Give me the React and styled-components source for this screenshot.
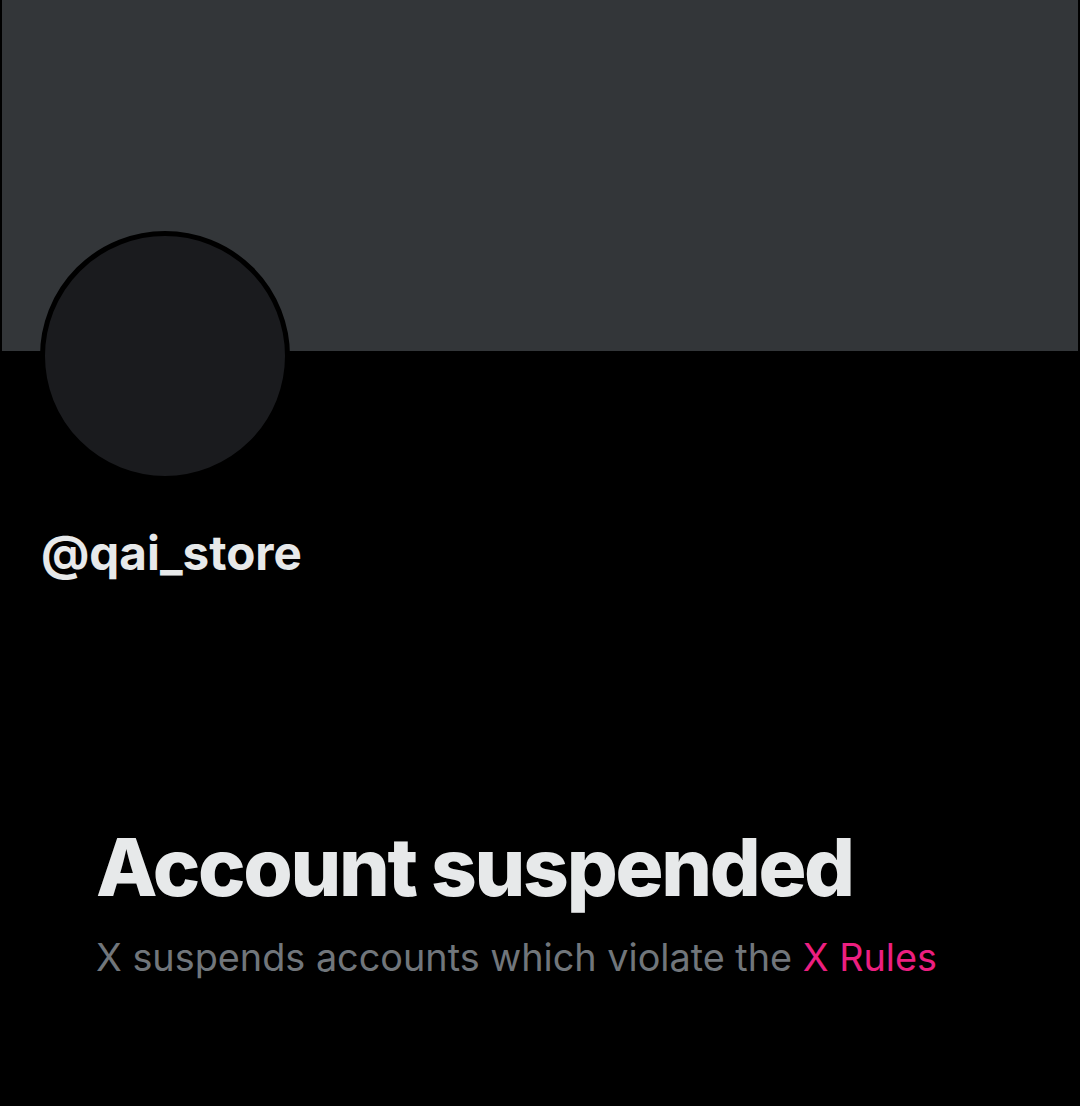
import React from 'react';
import styled, { createGlobalStyle } from 'styled-components';

const GlobalStyle = createGlobalStyle`
  html, body {
    margin: 0;
    padding: 0;
    background: #000;
  }
  body {
    font-family: Inter, "Noto Sans", "Liberation Sans", sans-serif;
    color: #e7e9ea;
  }
`;

const Page = styled.div`
  width: 1080px;
  height: 1106px;
  background: #000;
  overflow: hidden;
`;

const Banner = styled.div`
  height: 351px;
  margin: 0 2px;
  background: #333639;
`;

const ProfileHead = styled.div`
  padding: 0 40px;
`;

const Avatar = styled.div`
  width: 240px;
  height: 240px;
  margin-top: -120px;
  border-radius: 50%;
  border: 5px solid #000;
  background: #1a1b1e;
`;

const Handle = styled.h2`
  margin: 46px 0 0 1px;
  font-size: 47.6px;
  font-weight: 700;
  line-height: 52px;
  letter-spacing: 0;
`;

const Notice = styled.section`
  padding: 240px 0 0 96px;
`;

const Title = styled.h1`
  margin: 0;
  font-size: 80px;
  font-weight: 800;
  line-height: 96px;
  letter-spacing: -2.3px;
`;

const Text = styled.p`
  margin: 18px 0 0;
  font-size: 37.8px;
  line-height: 48px;
  color: #71767b;
`;

const Link = styled.a`
  color: #ec1f80;
  text-decoration: none;
`;

export default function App() {
  return (
    <>
      <GlobalStyle />
      <Page>
        <Banner />
        <ProfileHead>
          <Avatar />
          <Handle>@qai_store</Handle>
        </ProfileHead>
        <Notice>
          <Title>Account suspended</Title>
          <Text>
            X suspends accounts which violate the <Link href="#">X Rules</Link>
          </Text>
        </Notice>
      </Page>
    </>
  );
}
